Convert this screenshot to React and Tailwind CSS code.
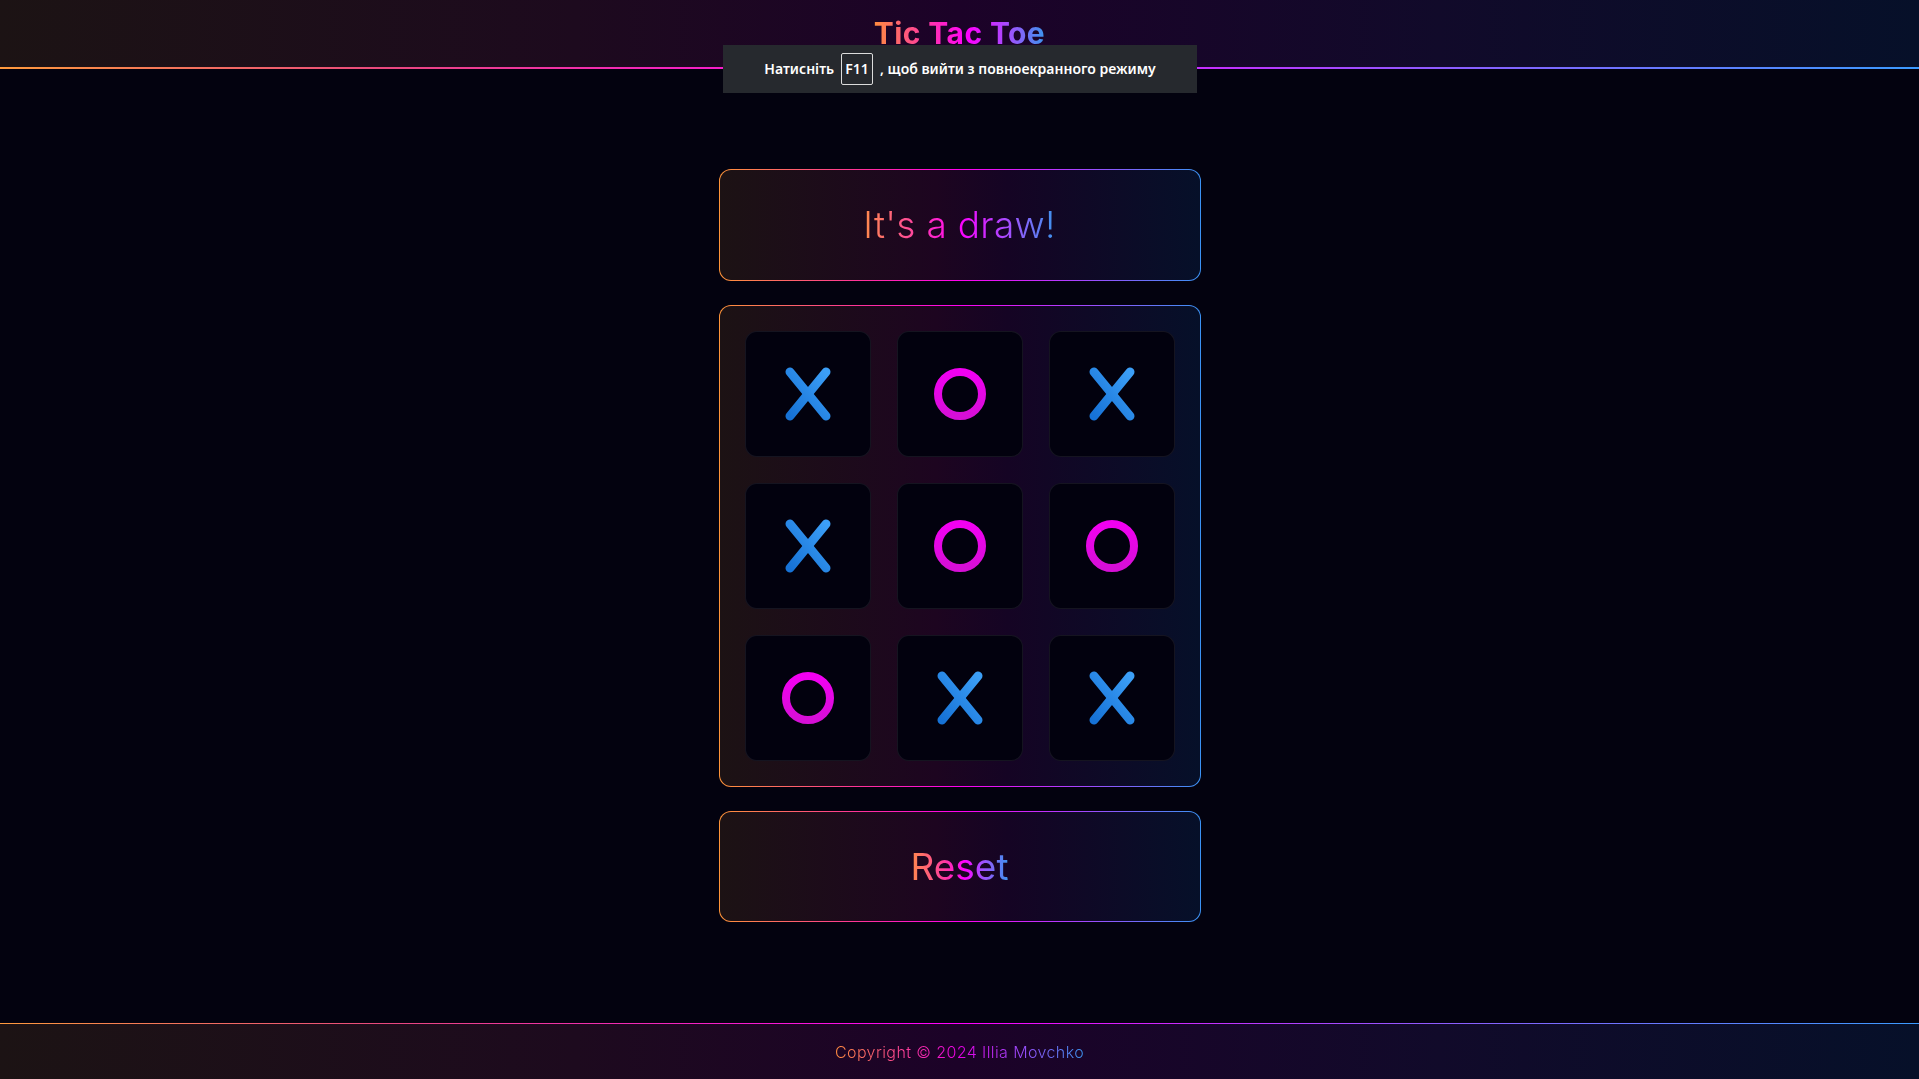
import React from "react";

const board = ["X", "O", "X", "X", "O", "O", "O", "X", "X"];

function XMark({ id }) {
  return (
    <svg width="60" height="64" viewBox="0 0 60 64">
      <defs>
        <linearGradient id={id} x1="0" y1="1" x2="1" y2="0">
          <stop offset="0" stopColor="#1672d6" />
          <stop offset="1" stopColor="#3c9ff7" />
        </linearGradient>
      </defs>
      <g stroke={`url(#${id})`} strokeWidth="9" strokeLinecap="round">
        <line x1="12" y1="10" x2="48" y2="54" />
        <line x1="48" y1="10" x2="12" y2="54" />
      </g>
    </svg>
  );
}

function OMark({ id }) {
  return (
    <svg width="60" height="60" viewBox="0 0 60 60">
      <defs>
        <linearGradient id={id} x1="0" y1="0" x2="0" y2="1">
          <stop offset="0" stopColor="#f200f2" />
          <stop offset="1" stopColor="#d60fd6" />
        </linearGradient>
      </defs>
      <circle cx="30" cy="30" r="22" fill="none" stroke={`url(#${id})`} strokeWidth="8" />
    </svg>
  );
}

function GradBox({ className = "", innerClass = "", children }) {
  return (
    <div className={`rounded-[12px] p-px bg-[linear-gradient(90deg,#ff9438,#ff2f9c_30%,#ff00f0_50%,#b23cff_72%,#3b93f5)] ${className}`}>
      <div className={`rounded-[11px] h-full bg-[linear-gradient(90deg,#1c1214,#1d0520_45%,#150424_60%,#061029)] ${innerClass}`}>
        {children}
      </div>
    </div>
  );
}

export default function App() {
  return (
    <div className="min-h-screen flex flex-col bg-[#03020f] font-['Inter','Noto_Sans',sans-serif] relative">
      {/* Header */}
      <header className="h-[69px] shrink-0 flex flex-col bg-[linear-gradient(90deg,#1c1314,#1d0a1e_30%,#1c0228_50%,#110a2a_75%,#061029)]">
        <div className="flex-1 flex items-center justify-center">
          <h1 className="text-[30px] leading-none font-bold tracking-[0.4px] bg-[linear-gradient(90deg,#ff8c3e,#ff3aa0_30%,#ff00ff_55%,#a64dff_78%,#3b95ee)] bg-clip-text text-transparent pb-[2px]">
            Tic Tac Toe
          </h1>
        </div>
        <div className="h-[2px] bg-[linear-gradient(90deg,#ff9a3d,#e9487e_20%,#ff00ff_50%,#8e5cff_75%,#3b9bff)]" />
      </header>

      {/* Main */}
      <main className="flex-1 flex flex-col items-center justify-center gap-[24px] pb-[2px]">
        <GradBox className="w-[482px] h-[112px]" innerClass="flex items-center justify-center">
          <span className="text-[37px] font-light leading-none tracking-[0.3px] bg-[linear-gradient(90deg,#ff8c4a,#ff4a9a_25%,#ff00ff_50%,#a64dff_75%,#3b95ee)] bg-clip-text text-transparent pt-[2px] pb-[2px]">
            It's a draw!
          </span>
        </GradBox>

        <GradBox className="w-[482px] h-[482px]" innerClass="p-[25px] grid grid-cols-3 grid-rows-3 gap-[26px]">
          {board.map((v, i) => (
            <div
              key={i}
              className="w-[126px] h-[126px] rounded-[12px] bg-[#02010e] border border-[#ffffff14] flex items-center justify-center"
            >
              {v === "X" ? <XMark id={`gx${i}`} /> : <OMark id={`go${i}`} />}
            </div>
          ))}
        </GradBox>

        <GradBox className="w-[482px] h-[111px]" innerClass="flex items-center justify-center">
          <span className="text-[37px] font-normal leading-none bg-[linear-gradient(90deg,#ff8c4a,#ff3aa0_35%,#ff00ff_55%,#a64dff_72%,#3b95ee)] bg-clip-text text-transparent pt-[2px] pb-[2px]">
            Reset
          </span>
        </GradBox>
      </main>

      {/* Footer */}
      <footer className="h-[56px] shrink-0 flex flex-col bg-[linear-gradient(90deg,#1c1314,#1d0a1e_30%,#1c0228_50%,#110a2a_75%,#061029)]">
        <div className="h-px bg-[linear-gradient(90deg,#ff9a3d,#e9487e_20%,#ff00ff_50%,#8e5cff_75%,#3b9bff)]" />
        <div className="flex-1 flex items-center justify-center">
          <span className="text-[16px] font-light tracking-[0.4px] bg-[linear-gradient(90deg,#ff8c3e,#ff3aa0_30%,#e600e6_50%,#9b4dff_75%,#3b95ee)] bg-clip-text text-transparent">
            Copyright © 2024 Illia Movchko
          </span>
        </div>
      </footer>

      {/* Fullscreen notice overlay */}
      <div className="absolute left-[723px] top-[45px] w-[474px] h-[48px] bg-[#26292e] flex items-center justify-center gap-[7px] font-['Noto_Sans',sans-serif] text-white text-[14px] font-semibold pb-[1px]">
        <span>Натисніть</span>
        <span className="w-[32px] h-[32px] border border-[#dcdcdc] rounded-[2px] flex items-center justify-center">F11</span>
        <span>, щоб вийти з повноекранного режиму</span>
      </div>
    </div>
  );
}
